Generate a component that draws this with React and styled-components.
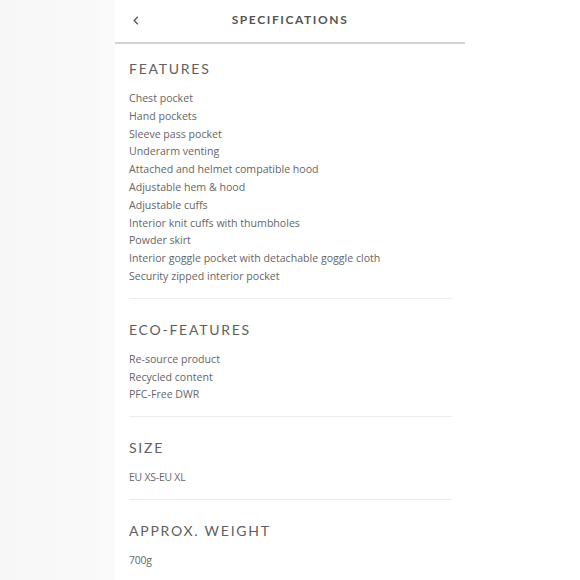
import React from 'react';
import styled, { createGlobalStyle } from 'styled-components';

const GlobalStyle = createGlobalStyle`
  html, body {
    margin: 0;
    padding: 0;
  }
  body {
    background: linear-gradient(90deg, #f7f7f7 0, #fafafa 115px, #fff 115px);
    min-height: 580px;
  }
`;

const Page = styled.div`
  width: 350px;
  margin: 0 auto;
  background: #fff;
  min-height: 580px;
`;

const Header = styled.header`
  height: 38px;
  padding-bottom: 4px;
  border-bottom: 2px solid #d2d2d2;
  display: flex;
  align-items: center;
  justify-content: center;
  position: relative;
`;

const BackButton = styled.button`
  position: absolute;
  left: 14px;
  top: 13px;
  width: 14px;
  height: 14px;
  padding: 0;
  border: 0;
  background: none;
  display: flex;
  align-items: center;
  justify-content: center;
  color: #555;
`;

const Title = styled.h1`
  margin: 0;
  font-family: Lato, 'Open Sans', sans-serif;
  font-weight: 700;
  font-size: 12px;
  letter-spacing: 1.6px;
  color: #555;
`;

const Content = styled.div`
  padding: 0 13px 0 14px;
`;

const Section = styled.section`
  padding: ${({ first }) => (first ? '15px' : '21px')} 0 12px;
  border-bottom: ${({ last }) => (last ? 'none' : '1px solid #ececec')};
`;

const Heading = styled.h2`
  margin: 0 0 11px;
  font-family: Lato, 'Open Sans', sans-serif;
  font-weight: 400;
  font-size: 14px;
  line-height: 20px;
  letter-spacing: 1.75px;
  color: #606060;
`;

const List = styled.ul`
  margin: 0;
  padding: 0;
  list-style: none;
`;

const Item = styled.li`
  font-family: 'Open Sans', sans-serif;
  font-size: ${({ small }) => (small ? '10.4px' : '10.6px')};
  letter-spacing: ${({ small }) => (small ? '-0.2px' : '0')};
  line-height: 17.8px;
  color: #666;
`;

const sections = [
  {
    title: 'FEATURES',
    items: [
      'Chest pocket',
      'Hand pockets',
      'Sleeve pass pocket',
      'Underarm venting',
      'Attached and helmet compatible hood',
      'Adjustable hem & hood',
      'Adjustable cuffs',
      'Interior knit cuffs with thumbholes',
      'Powder skirt',
      'Interior goggle pocket with detachable goggle cloth',
      'Security zipped interior pocket',
    ],
  },
  {
    title: 'ECO-FEATURES',
    items: ['Re-source product', 'Recycled content', 'PFC-Free DWR'],
  },
  { title: 'SIZE', items: ['EU XS-EU XL'], small: true },
  { title: 'APPROX. WEIGHT', items: ['700g'], small: true },
];

const App = () => (
  <>
    <GlobalStyle />
    <Page>
      <Header>
        <BackButton aria-label="Back">
          <svg width="6" height="9" viewBox="0 0 6 9" fill="none">
            <path d="M4.8 0.8 L1.2 4.5 L4.8 8.2" stroke="currentColor" strokeWidth="1.3" />
          </svg>
        </BackButton>
        <Title>SPECIFICATIONS</Title>
      </Header>
      <Content>
        {sections.map((s, i) => (
          <Section key={s.title} first={i === 0} last={i === sections.length - 1}>
            <Heading>{s.title}</Heading>
            <List>
              {s.items.map((it) => (
                <Item key={it} small={s.small}>
                  {it}
                </Item>
              ))}
            </List>
          </Section>
        ))}
      </Content>
    </Page>
  </>
);

export default App;
